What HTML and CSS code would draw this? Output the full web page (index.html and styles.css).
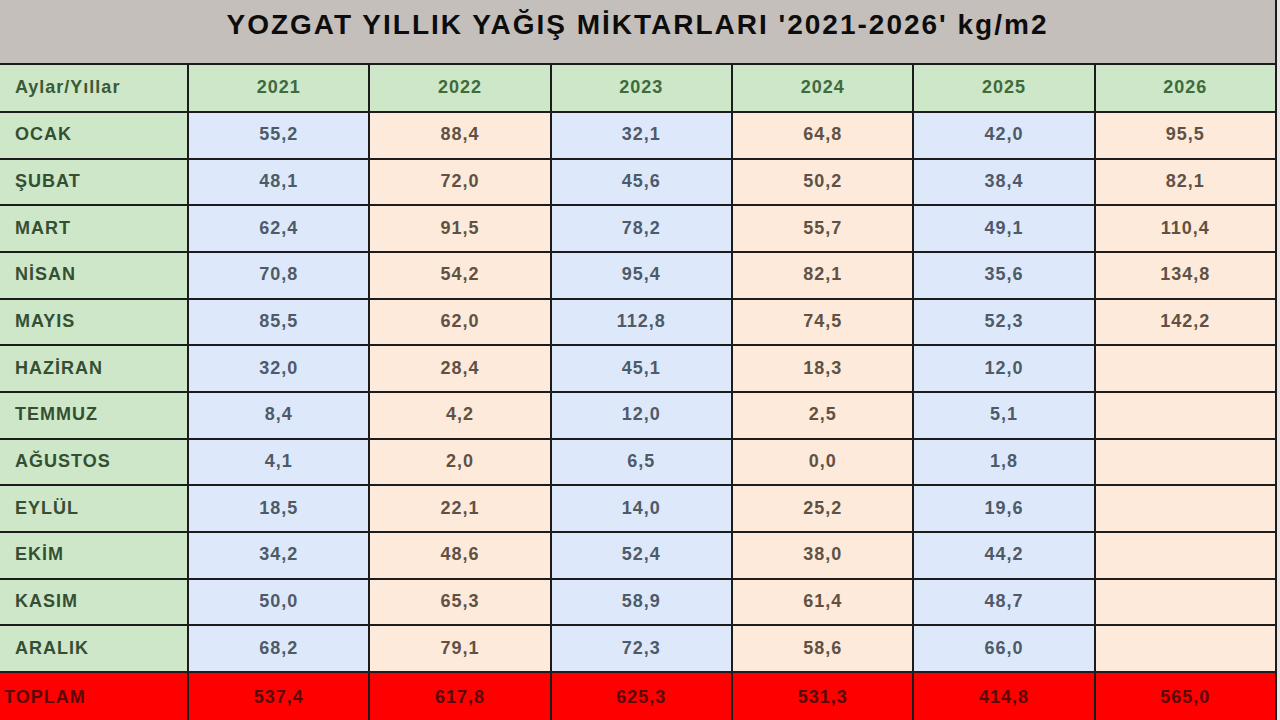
FILE: index.html
```html
<!DOCTYPE html>
<html lang="tr">
<head>
<meta charset="utf-8">
<title>Yozgat Yıllık Yağış Miktarları</title>
<link rel="stylesheet" href="styles.css">
</head>
<body>
<div class="sheet">
  <div class="title">YOZGAT YILLIK YAĞIŞ MİKTARLARI '2021-2026' kg/m2</div>
  <div class="grid">
    <div class="c hd lbl">Aylar/Yıllar</div>
    <div class="c hd">2021</div><div class="c hd">2022</div><div class="c hd">2023</div><div class="c hd">2024</div><div class="c hd">2025</div><div class="c hd">2026</div>

    <div class="c m">OCAK</div><div class="c b">55,2</div><div class="c p">88,4</div><div class="c b">32,1</div><div class="c p">64,8</div><div class="c b">42,0</div><div class="c p">95,5</div>
    <div class="c m">ŞUBAT</div><div class="c b">48,1</div><div class="c p">72,0</div><div class="c b">45,6</div><div class="c p">50,2</div><div class="c b">38,4</div><div class="c p">82,1</div>
    <div class="c m">MART</div><div class="c b">62,4</div><div class="c p">91,5</div><div class="c b">78,2</div><div class="c p">55,7</div><div class="c b">49,1</div><div class="c p">110,4</div>
    <div class="c m">NİSAN</div><div class="c b">70,8</div><div class="c p">54,2</div><div class="c b">95,4</div><div class="c p">82,1</div><div class="c b">35,6</div><div class="c p">134,8</div>
    <div class="c m">MAYIS</div><div class="c b">85,5</div><div class="c p">62,0</div><div class="c b">112,8</div><div class="c p">74,5</div><div class="c b">52,3</div><div class="c p">142,2</div>
    <div class="c m">HAZİRAN</div><div class="c b">32,0</div><div class="c p">28,4</div><div class="c b">45,1</div><div class="c p">18,3</div><div class="c b">12,0</div><div class="c p"></div>
    <div class="c m">TEMMUZ</div><div class="c b">8,4</div><div class="c p">4,2</div><div class="c b">12,0</div><div class="c p">2,5</div><div class="c b">5,1</div><div class="c p"></div>
    <div class="c m">AĞUSTOS</div><div class="c b">4,1</div><div class="c p">2,0</div><div class="c b">6,5</div><div class="c p">0,0</div><div class="c b">1,8</div><div class="c p"></div>
    <div class="c m">EYLÜL</div><div class="c b">18,5</div><div class="c p">22,1</div><div class="c b">14,0</div><div class="c p">25,2</div><div class="c b">19,6</div><div class="c p"></div>
    <div class="c m">EKİM</div><div class="c b">34,2</div><div class="c p">48,6</div><div class="c b">52,4</div><div class="c p">38,0</div><div class="c b">44,2</div><div class="c p"></div>
    <div class="c m">KASIM</div><div class="c b">50,0</div><div class="c p">65,3</div><div class="c b">58,9</div><div class="c p">61,4</div><div class="c b">48,7</div><div class="c p"></div>
    <div class="c m">ARALIK</div><div class="c b">68,2</div><div class="c p">79,1</div><div class="c b">72,3</div><div class="c p">58,6</div><div class="c b">66,0</div><div class="c p"></div>

    <div class="c t tl">TOPLAM</div><div class="c t">537,4</div><div class="c t">617,8</div><div class="c t">625,3</div><div class="c t">531,3</div><div class="c t">414,8</div><div class="c t">565,0</div>
  </div>
</div>
</body>
</html>
```

FILE: styles.css
```css
html, body {
  margin: 0;
  padding: 0;
  background: #e6e6e6;
  overflow: hidden;
  height: 720px;
}
body {
  font-family: "Liberation Sans", Arial, sans-serif;
}
.sheet {
  width: 1277px;
  background: #1c1c1c;
}
.title {
  height: 63px;
  box-sizing: border-box;
  margin-right: 2px;
  background: #c5bfbb;
  color: #0d0d0d;
  font-weight: bold;
  font-size: 28px;
  letter-spacing: 2px;
  display: flex;
  align-items: center;
  justify-content: center;
  padding-bottom: 14px;
}
.grid {
  display: grid;
  grid-template-columns: 187px repeat(6, 1fr);
  grid-template-rows: 46px repeat(12, 44.67px) 50px;
  gap: 2px;
  padding: 2px 2px 0 0;
}
.c {
  display: flex;
  align-items: center;
  justify-content: center;
  font-weight: bold;
  font-size: 18px;
  letter-spacing: 1px;
  padding-bottom: 1px;
}
.hd {
  background: #cde7c8;
  color: #3f6a3b;
}
.lbl, .m {
  justify-content: flex-start;
  padding-left: 15px;
}
.lbl {
  color: #3b5a38;
}
.m {
  background: #cde7c8;
  color: #344f33;
}
.b {
  background: #dde9fa;
  color: #4f5a69;
}
.p {
  background: #fdeadb;
  color: #5f5245;
}
.t {
  background: #ff0000;
  color: #5a0808;
  padding-bottom: 0;
}
.tl {
  justify-content: flex-start;
  padding-left: 4px;
}
```
